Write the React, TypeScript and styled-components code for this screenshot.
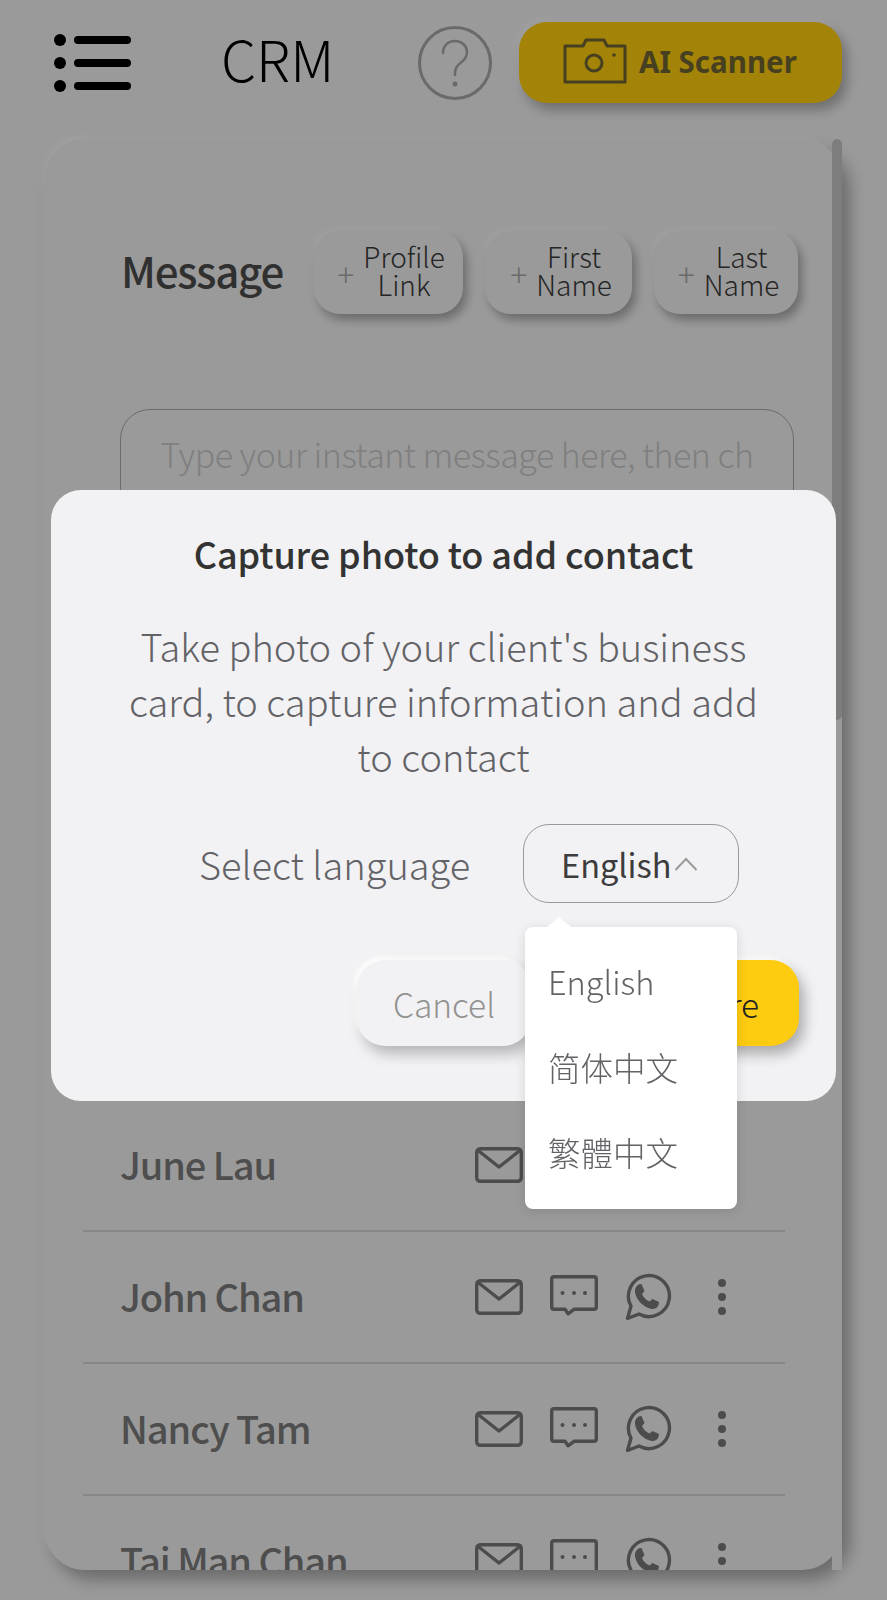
import styled, { createGlobalStyle } from 'styled-components';

const GlobalStyle = createGlobalStyle`
  html,
  body {
    margin: 0;
    padding: 0;
    background: #f1f1f1;
  }
  body {
    font-family: 'Noto Sans CJK SC', 'Noto Sans', sans-serif;
  }
`;

const contacts = ['June Lau', 'John Chan', 'Nancy Tam', 'Tai Man Chan'];
const languages = ['English', '简体中文', '繁體中文'];
const chips = [
  { first: 'Profile', second: 'Link', width: 149 },
  { first: 'First', second: 'Name', width: 147 },
  { first: 'Last', second: 'Name', width: 144 },
];

function MenuIcon() {
  return (
    <MenuSvg width="78" height="62" viewBox="0 0 78 62">
      <circle cx="6" cy="8" r="6" fill="#000" />
      <circle cx="6" cy="31" r="6" fill="#000" />
      <circle cx="6" cy="54" r="6" fill="#000" />
      <path
        d="M24 8h49M24 31h49M24 54h49"
        stroke="#000"
        strokeWidth="8"
        strokeLinecap="round"
      />
    </MenuSvg>
  );
}

function HelpIcon() {
  return (
    <svg width="74" height="74" viewBox="0 0 74 74" fill="none">
      <circle cx="37" cy="37" r="35.5" stroke="#a6a6a6" strokeWidth="3" />
      <path
        d="M25 27c0-7 5-12 12-12s12 5 12 11c0 5-2.500 8-6 10.500-4 3-6 5.500-6 10.500v2"
        stroke="#a6a6a6"
        strokeWidth="2.500"
        strokeLinecap="round"
      />
      <circle cx="37" cy="58" r="2.500" fill="#a6a6a6" />
    </svg>
  );
}

function CameraIcon() {
  return (
    <svg width="64" height="46" viewBox="0 0 64 46" fill="none">
      <path
        d="M2 8h18l3-6h18l3 6h18v36H2z"
        stroke="#6f6433"
        strokeWidth="3"
        strokeLinejoin="round"
      />
      <circle cx="31" cy="25" r="8" stroke="#6f6433" strokeWidth="3" />
      <circle cx="51" cy="17" r="1.800" fill="#6f6433" />
    </svg>
  );
}

function MailIcon() {
  return (
    <svg width="48" height="36" viewBox="0 0 48 36" fill="none">
      <rect x="1.700" y="1.700" width="44.600" height="32.600" rx="3.500" stroke="#777" strokeWidth="3.400" />
      <path d="M2.500 3l21.500 17L45.500 3" stroke="#777" strokeWidth="3.400" strokeLinejoin="round" />
    </svg>
  );
}

function ChatIcon() {
  return (
    <ChatSvg width="48" height="41" viewBox="0 0 48 41" fill="none">
      <path
        d="M4 1.700h40c1.300 0 2.300 1 2.300 2.300v28c0 1.300-1 2.300-2.300 2.300H24l-6 4.500-3-4.500H4c-1.300 0-2.300-1-2.300-2.300V4c0-1.300 1-2.300 2.300-2.300z"
        stroke="#777"
        strokeWidth="3.400"
        strokeLinejoin="round"
      />
      <circle cx="12.500" cy="18" r="2" fill="#777" />
      <circle cx="24" cy="18" r="2" fill="#777" />
      <circle cx="35" cy="18" r="2" fill="#777" />
    </ChatSvg>
  );
}

function WhatsappIcon() {
  return (
    <svg width="47" height="48" viewBox="0 0 47 48" fill="none">
      <path
        d="M2.500 45.500L6 33A20.500 20.500 0 1 1 14 41z"
        stroke="#777"
        strokeWidth="3.400"
        strokeLinejoin="round"
      />
      <path
        d="M13.500 11.500l3-.5 3 7-2.500 3c1.500 3.500 4 6 7.500 7.500l3-2.500 6.500 3-.5 3c-1 3-4 4.500-7 4C18 34 11 27 10 19c-.5-3 1-6 3.500-7.500z"
        fill="#777"
      />
    </svg>
  );
}

function ChevronUp() {
  return (
    <svg width="24" height="14" viewBox="0 0 24 14" fill="none">
      <path d="M1.500 13L12 2l10.500 11" stroke="#9a9a9a" strokeWidth="2" />
    </svg>
  );
}

export default function App() {
  return (
    <Page>
      <GlobalStyle />
      <Header>
        <MenuIcon />
        <Title>CRM</Title>
        <HelpButton>
          <HelpIcon />
        </HelpButton>
        <ScannerButton>
          <CameraIcon />
          <ScannerLabel>AI Scanner</ScannerLabel>
        </ScannerButton>
      </Header>

      <Card>
        <CardBody>
          <MessageRow>
            <MessageLabel>Message</MessageLabel>
            <ChipList>
              {chips.map((chip) => (
                <Chip key={chip.first} $width={chip.width}>
                  <ChipPlus>+</ChipPlus>
                  <ChipText>
                    {chip.first}
                    <br />
                    {chip.second}
                  </ChipText>
                </Chip>
              ))}
            </ChipList>
          </MessageRow>

          <MessageBox>Type your instant message here, then choose</MessageBox>

          <ContactList>
            {contacts.map((name) => (
              <ContactRow key={name}>
                <ContactName>{name}</ContactName>
                <ContactActions>
                  <MailIcon />
                  <ChatIcon />
                  <WhatsappIcon />
                  <MoreDots>
                    <i />
                    <i />
                    <i />
                  </MoreDots>
                </ContactActions>
              </ContactRow>
            ))}
          </ContactList>
        </CardBody>
        <ScrollTrack>
          <ScrollThumb />
        </ScrollTrack>
      </Card>

      <Overlay>
        <Modal>
          <ModalTitle>Capture photo to add contact</ModalTitle>
          <ModalText>
            Take photo of your client's business card, to capture information and add to contact
          </ModalText>
          <LanguageRow>
            <LanguageLabel>Select language</LanguageLabel>
            <Select>
              <SelectValue>English</SelectValue>
              <ChevronUp />
              <Dropdown>
                {languages.map((language) => (
                  <DropdownItem key={language}>{language}</DropdownItem>
                ))}
              </Dropdown>
            </Select>
          </LanguageRow>
          <ModalActions>
            <CancelButton>Cancel</CancelButton>
            <CaptureButton>Capture</CaptureButton>
          </ModalActions>
        </Modal>
      </Overlay>
    </Page>
  );
}

const Page = styled.div`
  width: 887px;
  height: 1600px;
  overflow: hidden;
  background: #f1f1f1;
`;

const Header = styled.header`
  display: flex;
  align-items: center;
  height: 117px;
  box-sizing: border-box;
  padding: 22px 45px 14px 54px;
`;

const MenuSvg = styled.svg`
  flex-shrink: 0;
`;

const Title = styled.h1`
  margin: 0 0 10px 89px;
  width: 111px;
  font-size: 56px;
  font-weight: 300;
  line-height: 1;
  color: #000;
  white-space: nowrap;
`;

const HelpButton = styled.div`
  display: flex;
  margin-left: 86px;
`;

const ScannerButton = styled.div`
  display: flex;
  align-items: center;
  gap: 12px;
  box-sizing: border-box;
  width: 323px;
  height: 81px;
  margin-left: 27px;
  padding: 0 0 3px 44px;
  border-radius: 28px;
  background: #ffcf0d;
  box-shadow: 5px 7px 12px rgba(0, 0, 0, 0.28), -3px -4px 6px rgba(255, 255, 255, 0.6);
`;

const ScannerLabel = styled.span`
  font-family: 'Noto Sans', sans-serif;
  font-size: 29.5px;
  font-weight: 700;
  color: #6f6433;
  white-space: nowrap;
`;

const Card = styled.section`
  display: flex;
  width: 797px;
  height: 1431px;
  margin: 22px 0 0 45px;
  border-radius: 40px;
  box-shadow: 8px 10px 16px rgba(0, 0, 0, 0.3), -2px -3px 4px rgba(255, 255, 255, 0.8);
`;

const CardBody = styled.div`
  flex: 1;
  min-width: 0;
  box-sizing: border-box;
  padding: 92px 0 0 38px;
  overflow: hidden;
  border-radius: 40px;
  background: #f1f1f1;
`;

const ScrollTrack = styled.div`
  width: 10px;
  background: #f1f1f1;
`;

const ScrollThumb = styled.div`
  height: 581px;
  border-radius: 5px;
  background: #c4c4c4;
`;

const MessageRow = styled.div`
  display: flex;
  align-items: center;
  padding-left: 38px;
`;

const MessageLabel = styled.span`
  width: 193px;
  margin-bottom: 6px;
  font-size: 42px;
  font-weight: 500;
  letter-spacing: -1.2px;
  color: #4c4c4c;
`;

const ChipList = styled.div`
  display: flex;
  gap: 22px;
`;

const Chip = styled.div<{ $width: number }>`
  display: flex;
  align-items: center;
  justify-content: center;
  gap: 9px;
  box-sizing: border-box;
  width: ${({ $width }) => $width}px;
  height: 83px;
  padding-left: 5px;
  border-radius: 26px;
  background: #f1f1f1;
  box-shadow: 4px 6px 10px rgba(0, 0, 0, 0.3), -2px -3px 5px rgba(255, 255, 255, 0.7);
`;

const ChipPlus = styled.span`
  font-size: 32px;
  font-weight: 300;
  color: #a8a8a8;
`;

const ChipText = styled.span`
  margin-bottom: 5px;
  font-size: 28px;
  font-weight: 300;
  line-height: 28px;
  color: #3a3a3a;
  text-align: center;
`;

const MessageBox = styled.div`
  box-sizing: border-box;
  width: 674px;
  height: 300px;
  margin: 95px 0 0 37px;
  padding: 15px 32px;
  word-break: break-all;
  border: 1.500px solid #a8a8a8;
  border-radius: 30px;
  font-size: 34px;
  font-weight: 300;
  letter-spacing: -0.5px;
  line-height: 58px;
  color: #c8c8c8;
  text-align: center;
`;

const ContactList = styled.ul`
  width: 702px;
  margin: 391px 0 0;
  padding: 0;
  list-style: none;
`;

const ContactRow = styled.li`
  display: flex;
  align-items: center;
  justify-content: space-between;
  box-sizing: border-box;
  height: 132px;
  padding: 0 59px 0 37px;
  border-bottom: 2px solid #d4d4d4;
`;

const ContactName = styled.span`
  margin-bottom: 3px;
  font-size: 38px;
  font-weight: 500;
  letter-spacing: -1.1px;
  color: #7a7a7a;
  white-space: nowrap;
`;

const ContactActions = styled.div`
  display: flex;
  align-items: center;
  gap: 27px;
`;

const ChatSvg = styled.svg`
  margin-bottom: 3px;
`;

const MoreDots = styled.div`
  display: flex;
  flex-direction: column;
  gap: 6px;
  margin-left: 19px;

  i {
    display: block;
    width: 8px;
    height: 8px;
    border-radius: 50%;
    background: #777;
  }
`;

const Overlay = styled.div`
  position: fixed;
  inset: 0;
  background: rgba(0, 0, 0, 0.36);
`;

const Modal = styled.div`
  position: absolute;
  top: 490px;
  left: 51px;
  width: 785px;
  height: 611px;
  box-sizing: border-box;
  padding-top: 38px;
  border-radius: 30px;
  background: #f2f2f4;
`;

const ModalTitle = styled.h2`
  margin: 0;
  font-size: 36px;
  font-weight: 500;
  letter-spacing: -0.1px;
  line-height: 50px;
  color: #333;
  text-align: center;
`;

const ModalText = styled.p`
  margin: 40px 70px 0;
  font-size: 38px;
  font-weight: 300;
  line-height: 55px;
  color: #636367;
  text-align: center;
`;

const LanguageRow = styled.div`
  display: flex;
  align-items: center;
  margin-top: 41px;
  padding-left: 148px;
`;

const LanguageLabel = styled.span`
  width: 324px;
  font-size: 38px;
  font-weight: 300;
  color: #636367;
`;

const Select = styled.div`
  position: relative;
  display: flex;
  align-items: center;
  gap: 3px;
  box-sizing: border-box;
  width: 216px;
  height: 79px;
  padding-left: 37px;
  border: 1.500px solid #9a9a9a;
  border-radius: 26px;
`;

const SelectValue = styled.span`
  font-size: 32.5px;
  color: #3c3c3c;
`;

const Dropdown = styled.div`
  position: absolute;
  top: 102px;
  left: 1px;
  z-index: 2;
  box-sizing: border-box;
  width: 212px;
  height: 282px;
  padding: 11px 0;
  border-radius: 8px;
  background: #fff;
  box-shadow: 0 2px 12px rgba(0, 0, 0, 0.12);

  &::before {
    content: '';
    position: absolute;
    top: -10px;
    left: 22px;
    border-left: 12px solid transparent;
    border-right: 12px solid transparent;
    border-bottom: 10px solid #fff;
  }
`;

const DropdownItem = styled.div`
  display: flex;
  align-items: center;
  height: 85.5px;
  padding-left: 23px;
  font-size: 32.5px;
  font-weight: 300;
  color: #636367;
`;

const ModalActions = styled.div`
  display: flex;
  justify-content: flex-end;
  gap: 76px;
  margin-top: 57px;
  padding-right: 37px;
`;

const ActionButton = styled.div`
  display: flex;
  align-items: center;
  justify-content: center;
  height: 86px;
  border-radius: 28px;
  font-size: 33.5px;
`;

const CancelButton = styled(ActionButton)`
  width: 174px;
  font-weight: 300;
  color: #929292;
  background: #f2f2f4;
  box-shadow: 5px 8px 14px rgba(0, 0, 0, 0.25), -3px -3px 4px #fff;
`;

const CaptureButton = styled(ActionButton)`
  box-sizing: border-box;
  width: 192px;
  padding-right: 8px;
  font-weight: 300;
  color: #222;
  background: #fdcb0f;
  box-shadow: 5px 8px 14px rgba(0, 0, 0, 0.3), -3px -3px 4px #fff;
`;
